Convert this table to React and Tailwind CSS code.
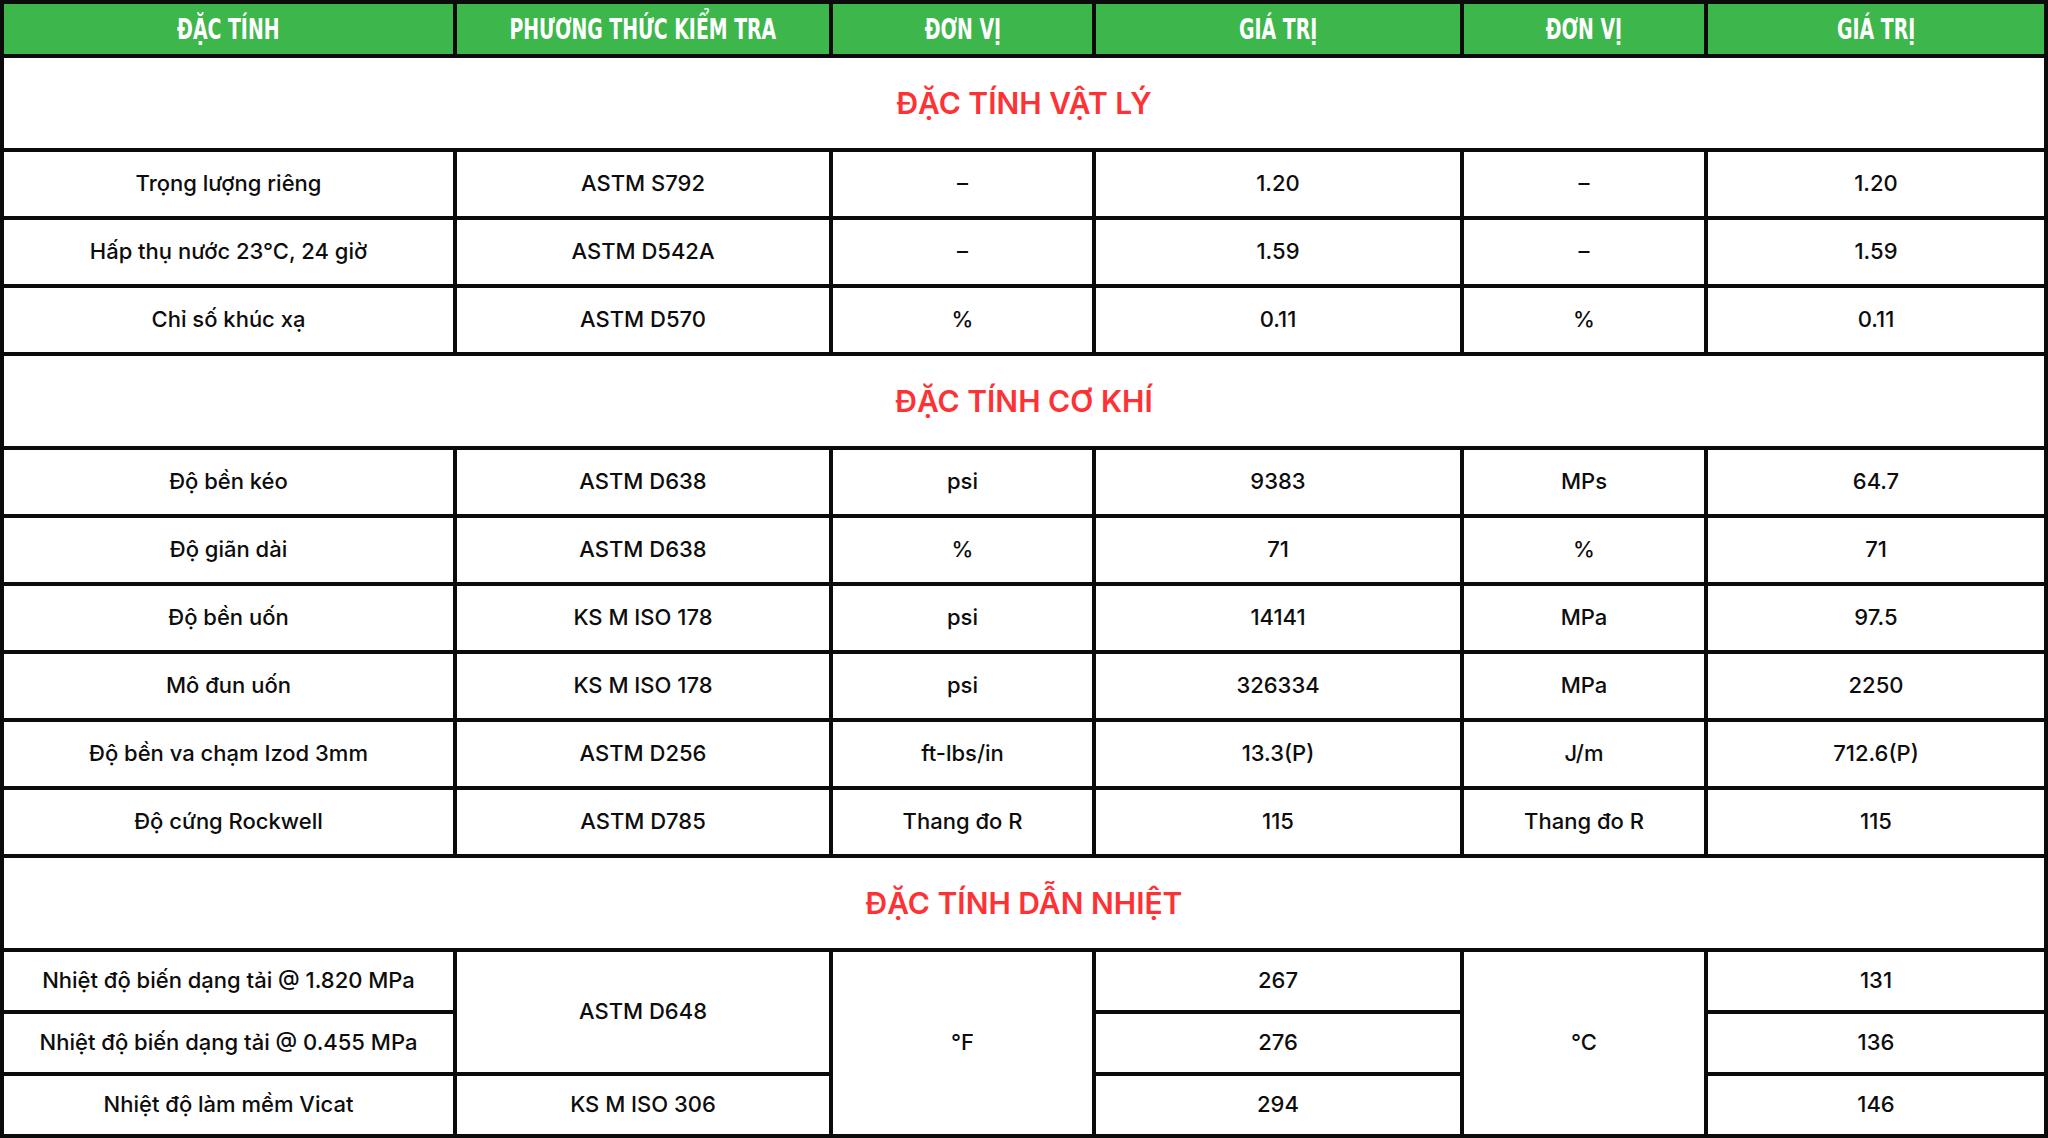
const headers = ["ĐẶC TÍNH", "PHƯƠNG THỨC KIỂM TRA", "ĐƠN VỊ", "GIÁ TRỊ", "ĐƠN VỊ", "GIÁ TRỊ"];

const physical = [
  ["Trọng lượng riêng", "ASTM S792", "–", "1.20", "–", "1.20"],
  ["Hấp thụ nước 23°C, 24 giờ", "ASTM D542A", "–", "1.59", "–", "1.59"],
  ["Chỉ số khúc xạ", "ASTM D570", "%", "0.11", "%", "0.11"],
];

const mechanical = [
  ["Độ bền kéo", "ASTM D638", "psi", "9383", "MPs", "64.7"],
  ["Độ giãn dài", "ASTM D638", "%", "71", "%", "71"],
  ["Độ bền uốn", "KS M ISO 178", "psi", "14141", "MPa", "97.5"],
  ["Mô đun uốn", "KS M ISO 178", "psi", "326334", "MPa", "2250"],
  ["Độ bền va chạm Izod 3mm", "ASTM D256", "ft-lbs/in", "13.3(P)", "J/m", "712.6(P)"],
  ["Độ cứng Rockwell", "ASTM D785", "Thang đo R", "115", "Thang đo R", "115"],
];

function Cell({ children, className = "" }) {
  return (
    <div className={`bg-white flex items-center justify-center pb-[1px] text-[22px] font-medium text-[#0d0d0d] ${className}`}>
      {children}
    </div>
  );
}

function Section({ title }) {
  return (
    <div className="col-span-6 bg-white flex items-center justify-center text-[30px] font-semibold text-[#fd3235]">
      {title}
    </div>
  );
}

function Rows({ rows }) {
  return rows.map((r, i) =>
    r.map((v, j) => <Cell key={`${i}-${j}`}>{v}</Cell>)
  );
}

export default function App() {
  return (
    <div className="w-[2048px] h-[1138px] bg-white" style={{ fontFamily: "Inter, 'Noto Sans', sans-serif" }}>
      <div className="grid grid-cols-[449px_372px_259px_364px_240px_336px] grid-rows-[50px_90px_repeat(3,64px)_90px_repeat(6,64px)_90px_repeat(3,58px)] gap-[4px] p-[4px] bg-[#0b0b0b]">
        {headers.map((h, i) => (
          <div key={i} className="bg-[#3db64b] flex items-center justify-center text-white">
            <span
              className="inline-block whitespace-nowrap text-[28px] font-bold scale-x-[0.75] pt-[2px]"
              style={{ fontFamily: "'Liberation Sans Narrow', 'DejaVu Sans Condensed', sans-serif" }}
            >
              {h}
            </span>
          </div>
        ))}

        <Section title="ĐẶC TÍNH VẬT LÝ" />
        <Rows rows={physical} />

        <Section title="ĐẶC TÍNH CƠ KHÍ" />
        <Rows rows={mechanical} />

        <Section title="ĐẶC TÍNH DẪN NHIỆT" />
        <Cell>Nhiệt độ biến dạng tải @ 1.820 MPa</Cell>
        <Cell className="row-span-2">ASTM D648</Cell>
        <Cell className="row-span-3">°F</Cell>
        <Cell>267</Cell>
        <Cell className="row-span-3">°C</Cell>
        <Cell>131</Cell>
        <Cell>Nhiệt độ biến dạng tải @ 0.455 MPa</Cell>
        <Cell>276</Cell>
        <Cell>136</Cell>
        <Cell>Nhiệt độ làm mềm Vicat</Cell>
        <Cell>KS M ISO 306</Cell>
        <Cell>294</Cell>
        <Cell>146</Cell>
      </div>
    </div>
  );
}
